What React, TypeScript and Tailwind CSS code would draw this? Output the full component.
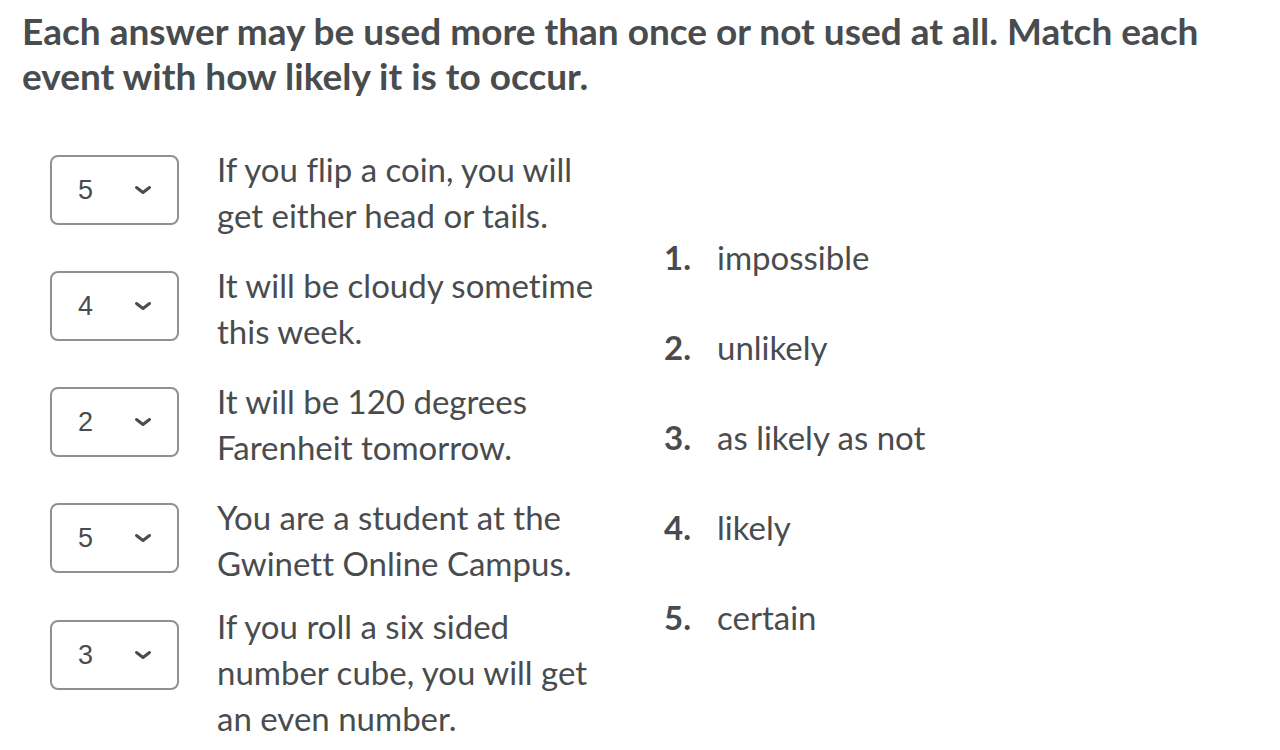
import React from 'react';

type Row = { value: string; text: string[] };

const rows: Row[] = [
  { value: '5', text: ['If you flip a coin, you will', 'get either head or tails.'] },
  { value: '4', text: ['It will be cloudy sometime', 'this week.'] },
  { value: '2', text: ['It will be 120 degrees', 'Farenheit tomorrow.'] },
  { value: '5', text: ['You are a student at the', 'Gwinett Online Campus.'] },
  { value: '3', text: ['If you roll a six sided', 'number cube, you will get', 'an even number.'] },
];

const answers = ['impossible', 'unlikely', 'as likely as not', 'likely', 'certain'];

function Chevron() {
  return (
    <svg width="20" height="12" viewBox="0 0 20 12" fill="none">
      <path d="M3.5 3.5l6.5 5 6.5-5" stroke="#494c4e" strokeWidth="3" strokeLinecap="round" strokeLinejoin="round" />
    </svg>
  );
}

function SelectBox({ value }: { value: string }) {
  return (
    <div className="flex h-[70px] w-[129px] shrink-0 items-center rounded-[8px] border-2 border-[#8d9194] bg-white pl-[26px] pr-[24px]">
      <span className="flex-1 text-[27px] text-[#494c4e] [font-family:'Liberation_Sans',Arial,sans-serif]">{value}</span>
      <Chevron />
    </div>
  );
}

export default function App() {
  return (
    <div className="min-h-screen bg-white px-[22px] pt-[8px] text-[#494c4e] [font-family:Lato,'Open_Sans',sans-serif] [font-variant-ligatures:none]">
      <h1 className="text-[37px] font-bold leading-[45px]">
        Each answer may be used more than once or not used at all. Match each event with how likely it is to occur.
      </h1>

      <div className="mt-[48px] flex items-center">
        <div className="flex w-[642px] shrink-0 flex-col pl-[28px]">
          {rows.map((row, i) => (
            <div key={i} className={`flex items-start gap-[38px] ${i === 0 ? '' : i === rows.length - 1 ? 'mt-[17px]' : 'mt-[24px]'}`}>
              <div className={i === rows.length - 1 ? 'pt-[17px]' : 'pt-[9px]'}>
                <SelectBox value={row.value} />
              </div>
              <p className="text-[33px] leading-[46px]">
                {row.text.map((line, j) => (
                  <span key={j} className="block">
                    {line}
                  </span>
                ))}
              </p>
            </div>
          ))}
        </div>

        <ol className="mb-[14px] flex flex-col gap-[44px]">
          {answers.map((a, i) => (
            <li key={a} className="flex text-[33px] leading-[46px]">
              <span className="w-[53px] font-bold">{i + 1}.</span>
              <span>{a}</span>
            </li>
          ))}
        </ol>
      </div>
    </div>
  );
}
